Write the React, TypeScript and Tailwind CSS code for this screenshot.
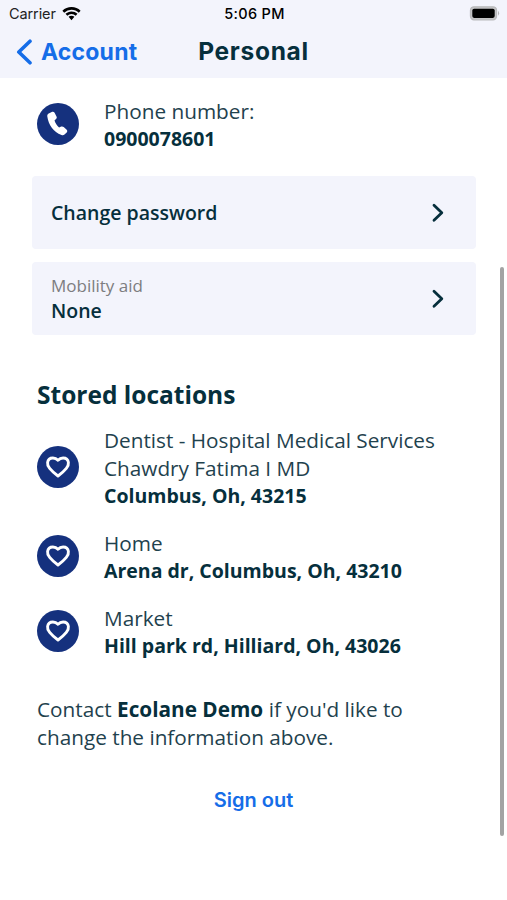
import React from "react";

interface StoredLocation {
  id: number;
  name: string;
  address: string;
}

const locations: StoredLocation[] = [
  {
    id: 1,
    name: "Dentist - Hospital Medical Services Chawdry Fatima I MD",
    address: "Columbus, Oh, 43215",
  },
  { id: 2, name: "Home", address: "Arena dr, Columbus, Oh, 43210" },
  { id: 3, name: "Market", address: "Hill park rd, Hilliard, Oh, 43026" },
];

const StatusBar = () => (
  <div className="grid h-7 grid-cols-3 items-center pl-[9px] pr-[7px] font-['Inter','Liberation_Sans',sans-serif] text-black">
    <div className="flex items-center gap-[6px]">
      <span className="text-[14.5px] leading-7 tracking-[-0.1px] text-[#222]">Carrier</span>
      <svg className="-mt-px" width="19" height="14" viewBox="0 0 19 14" fill="currentColor">
        <path d="M9.5 0C6 0 2.8 1.3.4 3.7l1.8 2A10.4 10.4 0 0 1 9.5 2.7c2.8 0 5.4 1.1 7.3 3l1.8-2A12.9 12.9 0 0 0 9.5 0Z" />
        <path d="M9.5 4.4c-2.3 0-4.4.9-6 2.4l1.8 2a6.1 6.1 0 0 1 8.4 0l1.8-2a8.7 8.7 0 0 0-6-2.4Z" />
        <path d="M9.5 8.7c-1.1 0-2.1.4-2.9 1.1l2.9 3.4 2.9-3.4c-.8-.7-1.8-1.1-2.9-1.1Z" />
      </svg>
    </div>
    <span className="text-center text-[14.5px] font-medium leading-7 tracking-[0.3px]">5:06 PM</span>
    <svg className="-mt-[2px] justify-self-end" width="31" height="15" viewBox="0 0 31 15">
      <rect x="1.5" y="0.8" width="26" height="13" rx="3.5" fill="#c4c4c6" stroke="#b9b9bb" strokeWidth="1.3" />
      <rect x="3.3" y="2.7" width="22.4" height="9.2" rx="1.8" fill="#000" />
      <path d="M29 4.8a3.4 3.4 0 0 1 0 5Z" fill="#b4b4b6" />
    </svg>
  </div>
);

const Chevron = () => (
  <svg width="12" height="20" viewBox="0 0 12 20" fill="none" stroke="#062f3c" strokeWidth="2.8" strokeLinecap="round" strokeLinejoin="round">
    <path d="M2 2.2 9.8 9.7 2 17.2" />
  </svg>
);

const Badge = ({ children }: { children: React.ReactNode }) => (
  <div className="-mt-[2px] flex h-[42px] w-[42px] shrink-0 items-center justify-center rounded-full bg-[#15317e]">
    {children}
  </div>
);

const PhoneIcon = () => (
  <svg width="24" height="28" viewBox="0 0 24 28" fill="#fff">
    <path d="M2.7 3.6 5.7 2c1.200-.6 2.300-.3 2.900.8l1.900 3.700c.5 1 .3 1.900-.5 2.600l-1.500 1.300c.9 2.900 2.400 5 4.600 7.100l2.100-.9c.9-.4 1.800-.2 2.500.5l3 2.700c.8.8.8 1.800 0 2.600l-2.200 2.200c-.8.8-1.900 1-3 .5C7.400 21.800 2.500 15 1.300 6.500c-.2-1.300.3-2.300 1.400-2.900Z" />
  </svg>
);

const HeartIcon = () => (
  <svg width="26" height="24" viewBox="0 0 26 24" fill="none" stroke="#fff" strokeWidth="2.9" strokeLinejoin="round">
    <path d="M13 21C10 18.900 6.800 16 4.700 13.400 2.800 11.100 2.300 9.300 2.600 7.400 3 4.700 5.200 3 7.900 3 9.900 3 11.700 3.800 13 5.200 14.300 3.800 16.100 3 18.100 3 20.800 3 23 4.700 23.400 7.400 23.700 9.300 23.200 11.100 21.300 13.400 19.200 16 16 18.900 13 21Z" />
  </svg>
);

const App = () => {
  return (
    <div className="relative h-[900px] w-[507px] overflow-hidden bg-white font-['Open_Sans','Noto_Sans',sans-serif] text-[#062f3c]">
      <header className="h-[78px] bg-[#f3f4fc]">
        <StatusBar />
        <div className="grid h-[47px] grid-cols-[170px_1fr_170px] items-center font-['Inter','Open_Sans',sans-serif] font-bold">
          <button className="flex items-center gap-[9px] pl-4 text-[23px] tracking-[0.2px] text-[#156de8]">
            <svg width="16" height="26" viewBox="0 0 16 26" fill="none" stroke="currentColor" strokeWidth="3.6" strokeLinecap="round" strokeLinejoin="round">
              <path d="M14 2.2 2.8 13 14 23.8" />
            </svg>
            <span className="pt-px">Account</span>
          </button>
          <h1 className="text-center text-[24.5px] tracking-[0.7px]">Personal</h1>
        </div>
      </header>

      <main>
        {/* Phone number */}
        <section className="flex items-center gap-[25px] pl-[37px] pt-[20px]">
          <Badge>
            <PhoneIcon />
          </Badge>
          <div className="text-[20.75px] leading-[27px] text-[#1f424e]">
            <p>Phone number:</p>
            <p className="text-[19.5px] font-bold text-[#062f3c]">0900078601</p>
          </div>
        </section>

        {/* Settings rows */}
        <section className="mt-[24px] space-y-[13px] pl-8 pr-[31px]">
          <div className="flex h-[73px] items-center justify-between rounded bg-[#f3f4fc] pl-[19px] pr-8">
            <span className="text-[19.5px] font-semibold">Change password</span>
            <Chevron />
          </div>
          <div className="flex h-[73px] items-center justify-between rounded bg-[#f3f4fc] pl-[19px] pr-8">
            <div className="-mt-[2px] leading-[25px]">
              <p className="text-[17px] text-[#7d7d80]">Mobility aid</p>
              <p className="text-[19.5px] font-semibold">None</p>
            </div>
            <Chevron />
          </div>
        </section>

        {/* Stored locations */}
        <section className="pl-[37px] pt-[44px]">
          <h2 className="text-[24.5px] font-bold leading-8">Stored locations</h2>
          <ul className="mt-4 space-y-5">
            {locations.map((location) => (
              <li key={location.id} className="flex items-center gap-[25px]">
                <Badge>
                  <HeartIcon />
                </Badge>
                <div className="w-[350px] leading-[27.5px]">
                  <p className="text-[20.75px] text-[#1f424e]">{location.name}</p>
                  <p className="text-[19.5px] font-bold">{location.address}</p>
                </div>
              </li>
            ))}
          </ul>
          <div className="mt-[35px] text-[20.75px] leading-[28.5px] text-[#1f424e]">
            <p className="flex gap-[5.5px]">
              <span>Contact</span>
              <strong className="text-[#062f3c]">Ecolane Demo</strong>
              <span>if you'd like to</span>
            </p>
            <p>change the information above.</p>
          </div>
        </section>

        <button className="mx-auto mt-[34px] block font-['Inter','Liberation_Sans',sans-serif] text-[20px] font-semibold leading-[28px] text-[#156de8]">
          Sign out
        </button>
      </main>

      {/* Scroll indicator */}
      <div className="absolute right-[3px] top-[267px] h-[569px] w-1 rounded-full bg-[#a3a3a3]" />
    </div>
  );
};

export default App;
